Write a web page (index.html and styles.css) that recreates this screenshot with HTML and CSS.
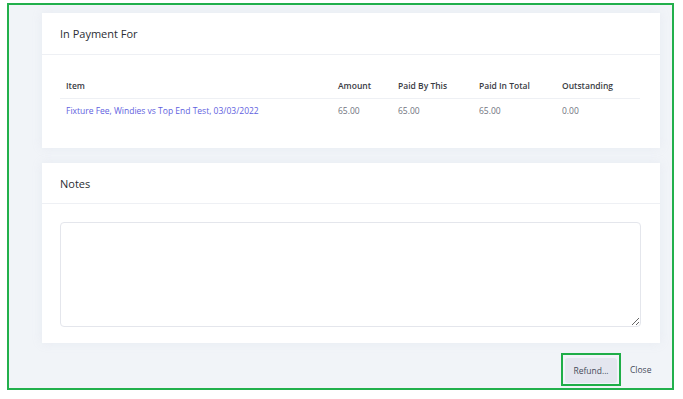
FILE: index.html
```html
<!DOCTYPE html>
<html>
<head>
<meta charset="utf-8">
<link rel="stylesheet" href="styles.css">
</head>
<body>
<div class="frame">
  <section class="card card-payment">
    <div class="card-head">In Payment For</div>
    <div class="card-body">
      <table class="tbl">
        <thead>
          <tr>
            <th class="c-item">Item</th>
            <th class="c-amt">Amount</th>
            <th class="c-pbt">Paid By This</th>
            <th class="c-pit">Paid In Total</th>
            <th class="c-out">Outstanding</th>
          </tr>
        </thead>
        <tbody>
          <tr>
            <td class="c-item"><a class="link">Fixture Fee, Windies vs Top End Test, 03/03/2022</a></td>
            <td>65.00</td>
            <td>65.00</td>
            <td>65.00</td>
            <td>0.00</td>
          </tr>
        </tbody>
      </table>
    </div>
  </section>
  <section class="card card-notes">
    <div class="card-head">Notes</div>
    <div class="card-body notes-body">
      <textarea class="notes"></textarea>
    </div>
  </section>
  <div class="footer">
    <div class="hl"><button class="btn btn-refund">Refund...</button></div>
    <button class="btn btn-close">Close</button>
  </div>
</div>
</body>
</html>
```
FILE: styles.css
```css
* { box-sizing: border-box; }
html, body { margin: 0; padding: 0; background: #ffffff; }
body {
  font-family: "Open Sans", "Noto Sans", sans-serif;
  color: #333;
}
.frame {
  margin: 3px 9px 0 7px;
  width: 667px;
  height: 387px;
  border: 2px solid #22b04c;
  background: #f1f4f8;
  padding: 8px 12px 0 33px;
  display: flex;
  flex-direction: column;
}
.card {
  background: #fff;
  box-shadow: 0 0 10px rgba(180, 190, 210, 0.15);
}
.card-head {
  height: 42px;
  padding: 0 18px;
  display: flex;
  align-items: center;
  font-size: 11px;
  color: #2b2d33;
  border-bottom: 1px solid #eef0f4;
}
.card-payment { height: 135px; }
.card-payment .card-body { padding: 18px 18px 0 18px; }
.tbl {
  width: 580px;
  border-collapse: collapse;
  font-size: 8.5px;
}
.tbl th {
  text-align: left;
  font-weight: 600;
  color: #3a3c44;
  height: 25px;
  padding: 0 0 0 6px;
  border-bottom: 1px solid #eef0f4;
}
.tbl td {
  height: 24px;
  padding: 0 0 0 6px;
  color: #707380;
}
.c-item { width: 272px; }
.c-amt { width: 60px; }
.c-pbt { width: 81px; }
.c-pit { width: 83px; }
.link { color: #6161e0; }
.card-notes { margin-top: 15px; height: 180px; }
.card-notes .card-head { height: 41px; }
.notes-body { padding: 18px 18px 0 18px; }
.notes {
  display: block;
  width: 581px;
  height: 105px;
  border: 1px solid #e4e6ec;
  border-radius: 4px;
  background: #fff;
  resize: vertical;
  outline: none;
}
.footer {
  margin-top: 10px;
  display: flex;
  align-items: center;
  gap: 6px;
  padding-left: 519px;
}
.hl {
  border: 2px solid #1fae48;
  padding: 2px;
  width: 60px;
  height: 33px;
}
.btn {
  font-family: "Open Sans", "Noto Sans", sans-serif;
  font-size: 8.5px;
  border: none;
  cursor: pointer;
}
.btn-refund {
  width: 100%;
  height: 100%;
  background: #e4e6ef;
  color: #464b5a;
  border-radius: 3px;
}
.btn-close {
  background: transparent;
  color: #464b5a;
  padding: 0 3px;
}
```
